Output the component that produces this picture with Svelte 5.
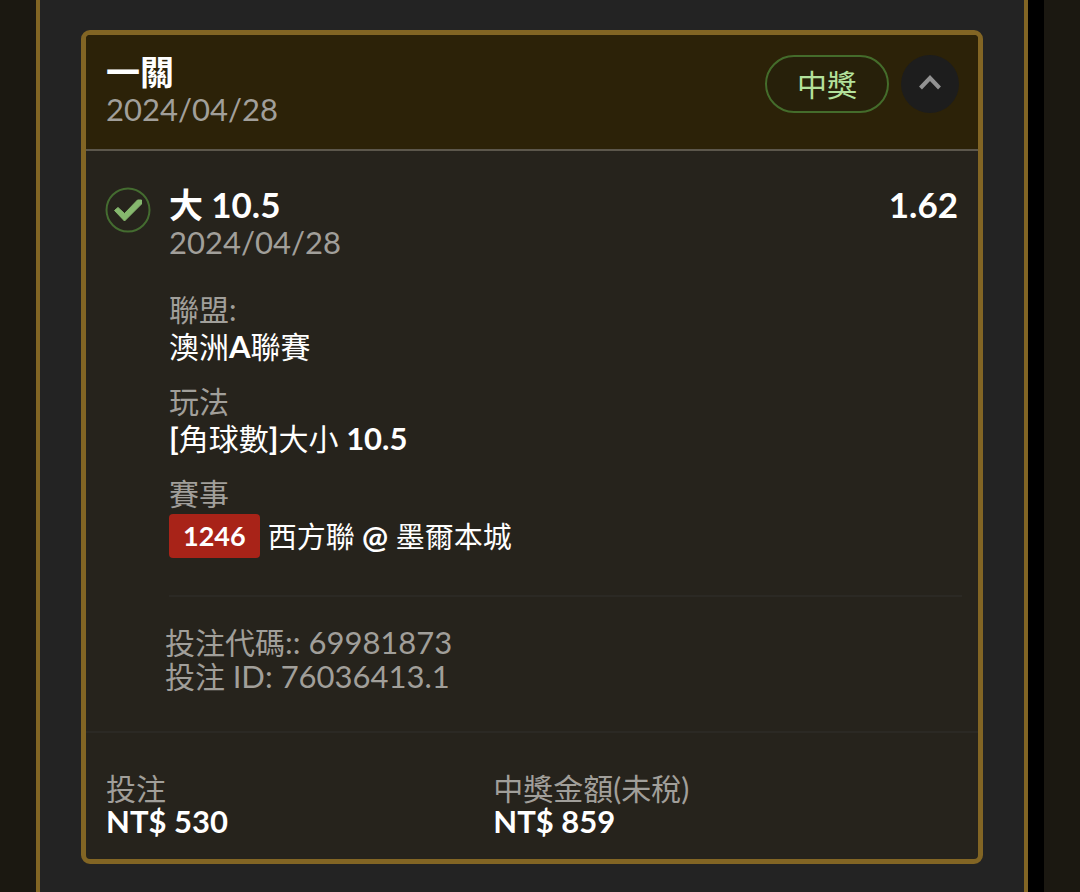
<script>
  let open = $state(true);

  const bet = {
    type: '一關',
    date: '2024/04/28',
    status: '中獎',
    stake: 'NT$ 530',
    payout: 'NT$ 859'
  };

  const leg = {
    pick: '大',
    line: '10.5',
    odds: '1.62',
    date: '2024/04/28',
    code: '1246'
  };
</script>

<div class="page">
  <main class="panel">
    <article class="card">
      <header class="card-header">
        <div class="heading">
          <h2>{bet.type}</h2>
          <time class="date">{bet.date}</time>
        </div>
        <span class="status">{bet.status}</span>
        <button
          class="toggle"
          class:closed={!open}
          type="button"
          aria-label="收合"
          aria-expanded={open}
          onclick={() => (open = !open)}
        >
          <svg width="22" height="16" viewBox="0 0 22 16" fill="none">
            <path d="M1.5 14L11 4L20.5 14" stroke="currentColor" stroke-width="4" />
          </svg>
        </button>
      </header>

      {#if open}
        <section class="leg">
          <svg class="won" width="46" height="46" viewBox="0 0 46 46" fill="none">
            <circle cx="23" cy="23" r="21.5" stroke="#446c30" stroke-width="2" />
            <path
              d="M9.5 23.5L13 20.5L19.5 26.5L32.5 13L36.5 13L36.5 17L19.5 34Z"
              fill="#86b86e"
              stroke="#86b86e"
              stroke-width="1"
              stroke-linejoin="round"
            />
          </svg>

          <div class="leg-main">
            <div class="pick">
              <h3>{leg.pick} <span class="big-num">{leg.line}</span></h3>
              <strong class="big-num">{leg.odds}</strong>
            </div>
            <time class="date">{leg.date}</time>

            <dl class="details">
              <div>
                <dt>聯盟:</dt>
                <dd>澳洲<b>A</b>聯賽</dd>
              </div>
              <div>
                <dt>玩法</dt>
                <dd><b>[</b>角球數<b>]</b>大小 <b>{leg.line}</b></dd>
              </div>
              <div>
                <dt>賽事</dt>
                <dd class="match">
                  <span class="code">{leg.code}</span>
                  <span class="teams">西方聯 <b>@</b> 墨爾本城</span>
                </dd>
              </div>
            </dl>
          </div>
        </section>

        <section class="ids">
          <p>投注代碼<span class="num">:: 69981873</span></p>
          <p>投注 <span class="num">ID: 76036413.1</span></p>
        </section>
      {/if}

      <dl class="totals">
        <div>
          <dt>投注</dt>
          <dd>{bet.stake}</dd>
        </div>
        <div>
          <dt>中獎金額(未稅)</dt>
          <dd>{bet.payout}</dd>
        </div>
      </dl>
    </article>
  </main>
</div>

<style>
  :global(body) {
    background: #1b1811;
  }

  .page {
    display: flex;
    box-sizing: border-box;
    min-height: 100vh;
    padding: 0 36px;
    font-family: Lato, 'Noto Sans CJK TC', sans-serif;
    font-size: 30px;
    line-height: 37px;
    color: #fff;
  }

  .panel {
    flex: 1;
    padding: 30px 41px 28px;
    background: #232323;
    border: solid #826524;
    border-width: 0 4px;
    box-shadow: 16px 0 0 #000;
    margin-right: 16px;
  }

  h2,
  h3,
  p,
  dl,
  dd {
    margin: 0;
  }

  .card {
    overflow: hidden;
    background: #26231c;
    border: 5px solid #826524;
    border-radius: 9px;
  }

  .card-header {
    display: flex;
    align-items: flex-start;
    gap: 12px;
    padding: 18px 19px 22px 20px;
    background: #2c2208;
    border-bottom: 2px solid #5c574c;
  }

  .heading {
    flex: 1;
  }

  h2,
  h3 {
    font-size: 34px;
    line-height: 38px;
    font-weight: 700;
  }

  .date {
    display: block;
    font-size: 31px;
    line-height: 36px;
    color: #a19f9a;
  }

  .status {
    box-sizing: border-box;
    min-width: 124px;
    margin-top: 2px;
    padding: 10px 30px;
    line-height: 34px;
    text-align: center;
    color: #b3e19b;
    background: #27200a;
    border: 2px solid #446c2b;
    border-radius: 29px;
  }

  .toggle {
    display: flex;
    align-items: center;
    justify-content: center;
    width: 58px;
    height: 58px;
    margin-top: 2px;
    padding: 0 0 4px;
    color: #929292;
    background: #1d1d1d;
    border: 0;
    border-radius: 50%;
    cursor: pointer;
  }

  .closed svg {
    transform: rotate(180deg);
  }

  .leg {
    display: flex;
    gap: 18px;
    padding: 34px 16px 0 19px;
  }

  .won {
    flex: none;
    margin-top: 2px;
  }

  .leg-main {
    flex: 1;
    padding-bottom: 37px;
    border-bottom: 2px solid #2b2924;
  }

  .pick {
    display: flex;
    justify-content: space-between;
    padding-right: 4px;
  }

  .big-num {
    font-size: 35px;
    line-height: 38px;
  }

  .details {
    display: grid;
    gap: 18px;
    margin-top: 31px;
  }

  dt {
    color: #a19f9a;
  }

  b {
    font-size: 31px;
    line-height: 1;
  }

  .match {
    display: flex;
    align-items: center;
    gap: 8px;
    margin-top: 2px;
  }

  .code {
    padding: 0 14px;
    font-size: 27px;
    line-height: 44px;
    font-weight: 700;
    background: #a82318;
    border-radius: 4px;
  }

  .teams {
    font-size: 29px;
  }

  .ids {
    padding: 28px 20px 38px 79px;
    line-height: 34px;
    color: #a19f9a;
    border-bottom: 2px solid #2b2924;
  }

  .num {
    font-size: 31px;
    line-height: 1;
  }

  .totals {
    display: grid;
    grid-template-columns: 5fr 6fr;
    padding: 39px 20px 21px;
    line-height: 33px;
  }

  .totals dd {
    font-size: 31px;
    font-weight: 700;
  }
</style>
